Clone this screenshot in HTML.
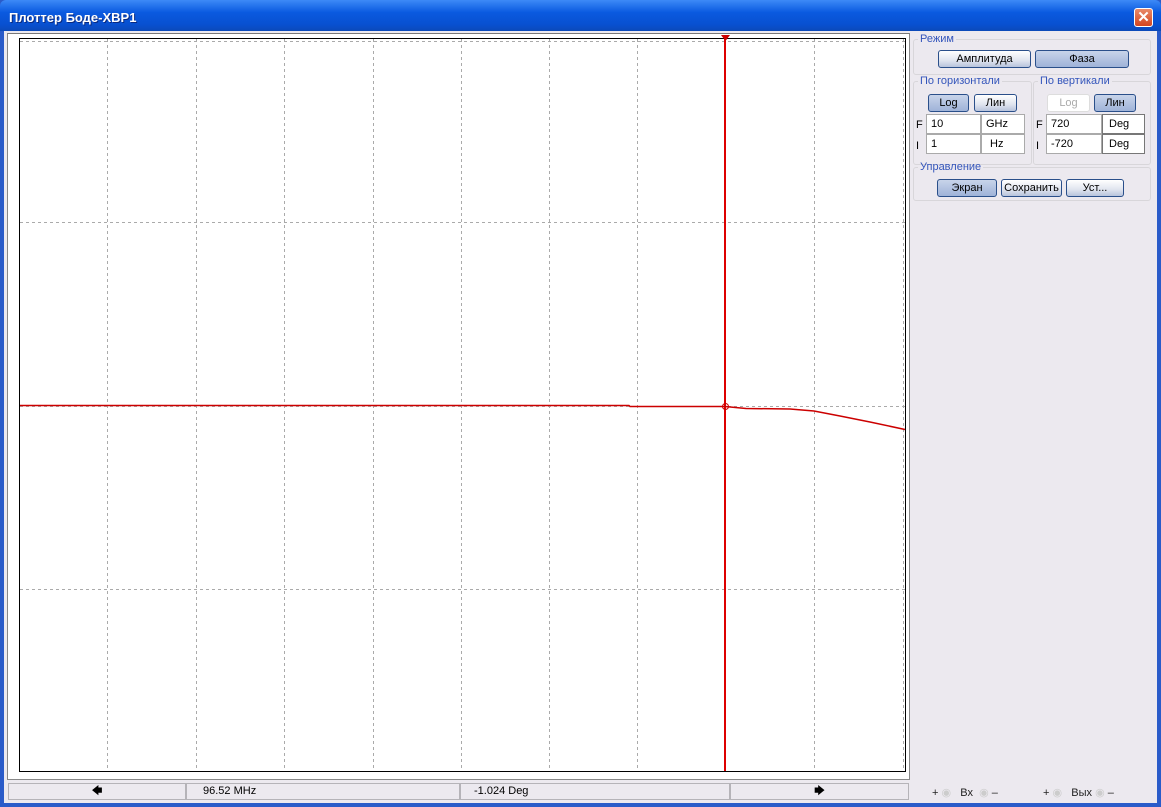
<!DOCTYPE html>
<html><head><meta charset="utf-8"><style>
*{margin:0;padding:0;box-sizing:border-box}
body{width:1161px;height:807px;overflow:hidden;background:#2a5bc9;font-family:"Liberation Sans",sans-serif;font-size:11px;position:relative}
.title{position:absolute;left:0;top:0;width:1161px;height:31px;background:linear-gradient(#3d8af7,#0a5ae0 40%,#0850d0 80%,#0b49b8);border-radius:6px 6px 0 0}
.title span{position:absolute;left:9px;top:10px;color:#fff;font-weight:bold;font-size:13px;text-shadow:1px 1px #0a2a80}
.close{position:absolute;left:1134px;top:8px;width:19px;height:19px;background:linear-gradient(#e88a6a,#d4451f);border:1px solid #fff;border-radius:3px;color:#fff;font-size:15px;font-weight:bold;text-align:center;line-height:17px}
.body{position:absolute;left:4px;top:31px;width:1153px;height:772px;background:#ece9ef}
.a{position:absolute}
fieldset{position:absolute;border:1px solid #d8d6da;border-radius:3px}
legend{color:#3355bb;font-size:11px;padding:0 2px;margin-left:4px}
.btn{position:absolute;height:18px;border:1px solid #2a4f8a;border-radius:3px;background:linear-gradient(#fff,#dfe4ee 60%,#b8c4dc);text-align:center;line-height:16px;font-size:11px;color:#000}
.btn.on{background:linear-gradient(#c8d4ea,#9fb3d8)}
.in{position:absolute;height:20px;background:#fff;border:1px solid #aaa;padding:3px 4px;font-size:11px}
.lab{position:absolute;font-size:11px}
.bar{position:absolute;top:783px;height:17px;background:#ece9ef;border:1px solid #b5b3b8;font-size:11px;line-height:15px}
</style></head><body>
<div class="title"><span>Плоттер Боде-XBP1</span><div class="close">✕</div></div>
<div class="body"></div>
<div class="a" style="left:7px;top:33px;width:903px;height:747px;background:#fff;border:1px solid #888;border-top-color:#777"></div>
<svg class="a" style="left:0;top:0" width="1161" height="807">
<rect x="19.5" y="38.5" width="886" height="733" fill="none" stroke="#000"/>
<g stroke="#aaa" stroke-dasharray="3,3">
<line x1="107.5" y1="39" x2="107.5" y2="771"/><line x1="196.5" y1="39" x2="196.5" y2="771"/><line x1="284.5" y1="39" x2="284.5" y2="771"/><line x1="373.5" y1="39" x2="373.5" y2="771"/><line x1="461.5" y1="39" x2="461.5" y2="771"/><line x1="549.5" y1="39" x2="549.5" y2="771"/><line x1="637.5" y1="39" x2="637.5" y2="771"/><line x1="814.5" y1="39" x2="814.5" y2="771"/><line x1="903.5" y1="39" x2="903.5" y2="771"/>
<line x1="20" y1="41.5" x2="905" y2="41.5"/><line x1="20" y1="222.5" x2="905" y2="222.5"/><line x1="20" y1="406.5" x2="905" y2="406.5"/><line x1="20" y1="589.5" x2="905" y2="589.5"/>
</g>
<rect x="724" y="36" width="2" height="735" fill="#d00"/>
<path d="M721 35 L730 35 L725.5 41 Z" fill="#c00"/>
<polyline points="20,405.5 629,405.5 630,406.5 725,406.5 746,408.5 790,409 814,411 840,416 870,422 905,429.5" fill="none" stroke="#c00" stroke-width="1.5"/>
<circle cx="725.5" cy="406.5" r="3" fill="none" stroke="#c00"/>
</svg>
<fieldset style="left:913px;top:33px;width:238px;height:42px"><legend>Режим</legend></fieldset>
<div class="btn" style="left:938px;top:50px;width:93px">Амплитуда</div>
<div class="btn on" style="left:1035px;top:50px;width:94px">Фаза</div>
<fieldset style="left:913px;top:75px;width:119px;height:90px"><legend>По горизонтали</legend></fieldset>
<fieldset style="left:1033px;top:75px;width:118px;height:90px"><legend>По вертикали</legend></fieldset>
<div class="btn on" style="left:928px;top:94px;width:41px">Log</div>
<div class="btn" style="left:974px;top:94px;width:43px">Лин</div>
<div class="btn" style="left:1047px;top:94px;width:43px;border-color:#ddd;color:#aaa;background:#fff">Log</div>
<div class="btn on" style="left:1094px;top:94px;width:42px">Лин</div>
<div class="lab" style="left:916px;top:119px">F</div><div class="lab" style="left:916px;top:140px">I</div>
<div class="lab" style="left:1036px;top:119px">F</div><div class="lab" style="left:1036px;top:140px">I</div>
<div class="in" style="left:926px;top:114px;width:55px">10</div><div class="in" style="left:981px;top:114px;width:44px">GHz</div>
<div class="in" style="left:926px;top:134px;width:55px">1</div><div class="in" style="left:981px;top:134px;width:44px;padding-left:8px">Hz</div>
<div class="in" style="left:1046px;top:114px;width:56px">720</div><div class="in" style="left:1102px;top:114px;width:43px;padding-left:6px;border-color:#777">Deg</div>
<div class="in" style="left:1046px;top:134px;width:56px">-720</div><div class="in" style="left:1102px;top:134px;width:43px;padding-left:6px;border-color:#777">Deg</div>
<fieldset style="left:913px;top:161px;width:238px;height:40px"><legend>Управление</legend></fieldset>
<div class="btn on" style="left:937px;top:179px;width:60px">Экран</div>
<div class="btn" style="left:1001px;top:179px;width:61px">Сохранить</div>
<div class="btn" style="left:1066px;top:179px;width:58px">Уст...</div>
<div class="bar" style="left:8px;width:178px;text-align:center;font-weight:bold;font-size:10px">&#129092;</div>
<div class="bar" style="left:186px;width:274px;padding-left:16px">96.52 MHz</div>
<div class="bar" style="left:460px;width:270px;padding-left:13px">-1.024 Deg</div>
<div class="bar" style="left:730px;width:179px;text-align:center;font-weight:bold;font-size:10px">&#129094;</div>
<div class="lab" style="left:932px;top:786px;color:#222">+ <span style="color:#ccc">◉</span> &nbsp; Вх &nbsp;<span style="color:#ccc">◉</span> –</div>
<div class="lab" style="left:1043px;top:786px;color:#222">+ <span style="color:#ccc">◉</span> &nbsp; Вых <span style="color:#ccc">◉</span> –</div>
</body></html>
